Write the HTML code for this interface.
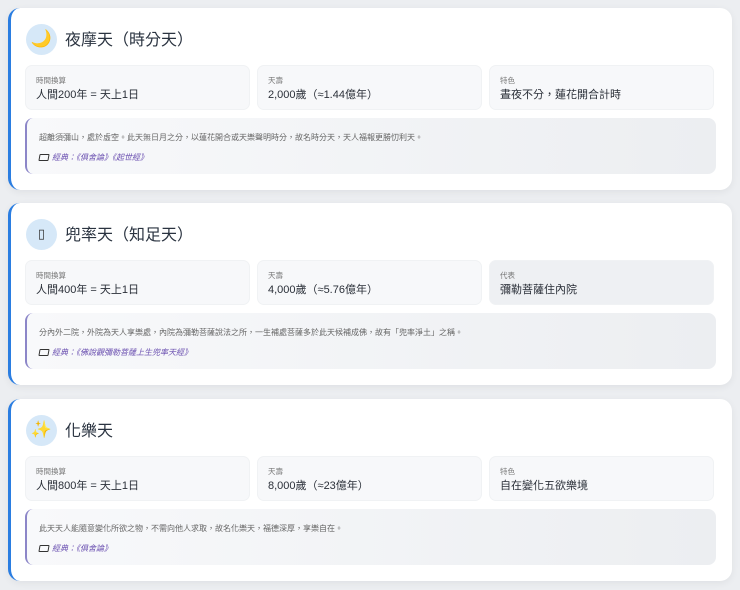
<!DOCTYPE html>
<html><head><meta charset="utf-8"><style>
*{box-sizing:border-box;margin:0;padding:0}
body{width:740px;height:590px;background:#eceef1;font-family:"Liberation Sans","Noto Sans CJK TC",sans-serif;color:#2c3440;position:relative;overflow:hidden}
.card{position:absolute;left:8px;width:724px;height:182px;background:#fff;border-radius:12px;border-left:3px solid #2a7de1;box-shadow:0 2px 8px rgba(0,0,0,0.06)}
.icon{position:absolute;left:15px;top:16px;width:31px;height:31px;border-radius:50%;background:#d6e8f8}
.icon span{position:absolute;left:0;top:0;width:31px;height:31px;line-height:31px;text-align:center;font-size:17px;font-family:"Noto Color Emoji","DejaVu Sans",sans-serif}
.title{position:absolute;left:54px;top:23px;font-size:16px;line-height:20px;color:#2a3340}
.box{position:absolute;top:57px;height:45px;width:225px;background:#f7f8fa;border:1px solid #f0f2f4;border-radius:7px;padding:10px 0 0 10px}
.box.dark{background:#eef0f3}
.lb{font-size:7.5px;color:#777;line-height:9px}
.val{font-size:11px;color:#2a2f38;margin-top:4px;line-height:13px}
.desc{position:absolute;left:14px;top:110px;width:691px;height:56px;border-radius:8px;border-left:2px solid #8c86c8;background:linear-gradient(90deg,#f8f9fb,#eceef1);padding:15px 0 0 12px}
.dt{font-size:8px;color:#666;line-height:10px}
.src{font-size:8px;color:#6a4fb0;font-style:italic;margin-top:10px;line-height:10px}
.bk{display:inline-block;width:10px;height:7px;border:1.2px solid #333;border-radius:1px;margin-right:3px;vertical-align:-1px;transform:skewX(-10deg)}
</style></head><body>

<div class="card" style="top:8px">
<div class="icon"><span>🌙</span></div><div class="title">夜摩天（時分天）</div>
<div class="box" style="left:14px"><div class="lb">時間換算</div><div class="val">人間200年 = 天上1日</div></div>
<div class="box" style="left:246px"><div class="lb">天壽</div><div class="val">2,000歲（≈1.44億年）</div></div>
<div class="box" style="left:478px"><div class="lb">特色</div><div class="val">晝夜不分，蓮花開合計時</div></div>
<div class="desc"><div class="dt">超離須彌山，處於虛空。此天無日月之分，以蓮花開合或天樂聲明時分，故名時分天，天人福報更勝忉利天。</div><div class="src"><span class="bk"></span>經典：《俱舍論》《起世經》</div></div>
</div>

<div class="card" style="top:203px">
<div class="icon"><span style="font-size:13px;color:#333">▯</span></div><div class="title">兜率天（知足天）</div>
<div class="box" style="left:14px"><div class="lb">時間換算</div><div class="val">人間400年 = 天上1日</div></div>
<div class="box" style="left:246px"><div class="lb">天壽</div><div class="val">4,000歲（≈5.76億年）</div></div>
<div class="box dark" style="left:478px"><div class="lb">代表</div><div class="val">彌勒菩薩住內院</div></div>
<div class="desc"><div class="dt">分內外二院，外院為天人享樂處，內院為彌勒菩薩說法之所，一生補處菩薩多於此天候補成佛，故有「兜率淨土」之稱。</div><div class="src"><span class="bk"></span>經典：《佛說觀彌勒菩薩上生兜率天經》</div></div>
</div>

<div class="card" style="top:399px">
<div class="icon"><span>✨</span></div><div class="title">化樂天</div>
<div class="box" style="left:14px"><div class="lb">時間換算</div><div class="val">人間800年 = 天上1日</div></div>
<div class="box" style="left:246px"><div class="lb">天壽</div><div class="val">8,000歲（≈23億年）</div></div>
<div class="box" style="left:478px"><div class="lb">特色</div><div class="val">自在變化五欲樂境</div></div>
<div class="desc"><div class="dt">此天天人能隨意變化所欲之物，不需向他人求取，故名化樂天，福德深厚，享樂自在。</div><div class="src"><span class="bk"></span>經典：《俱舍論》</div></div>
</div>

</body></html>
